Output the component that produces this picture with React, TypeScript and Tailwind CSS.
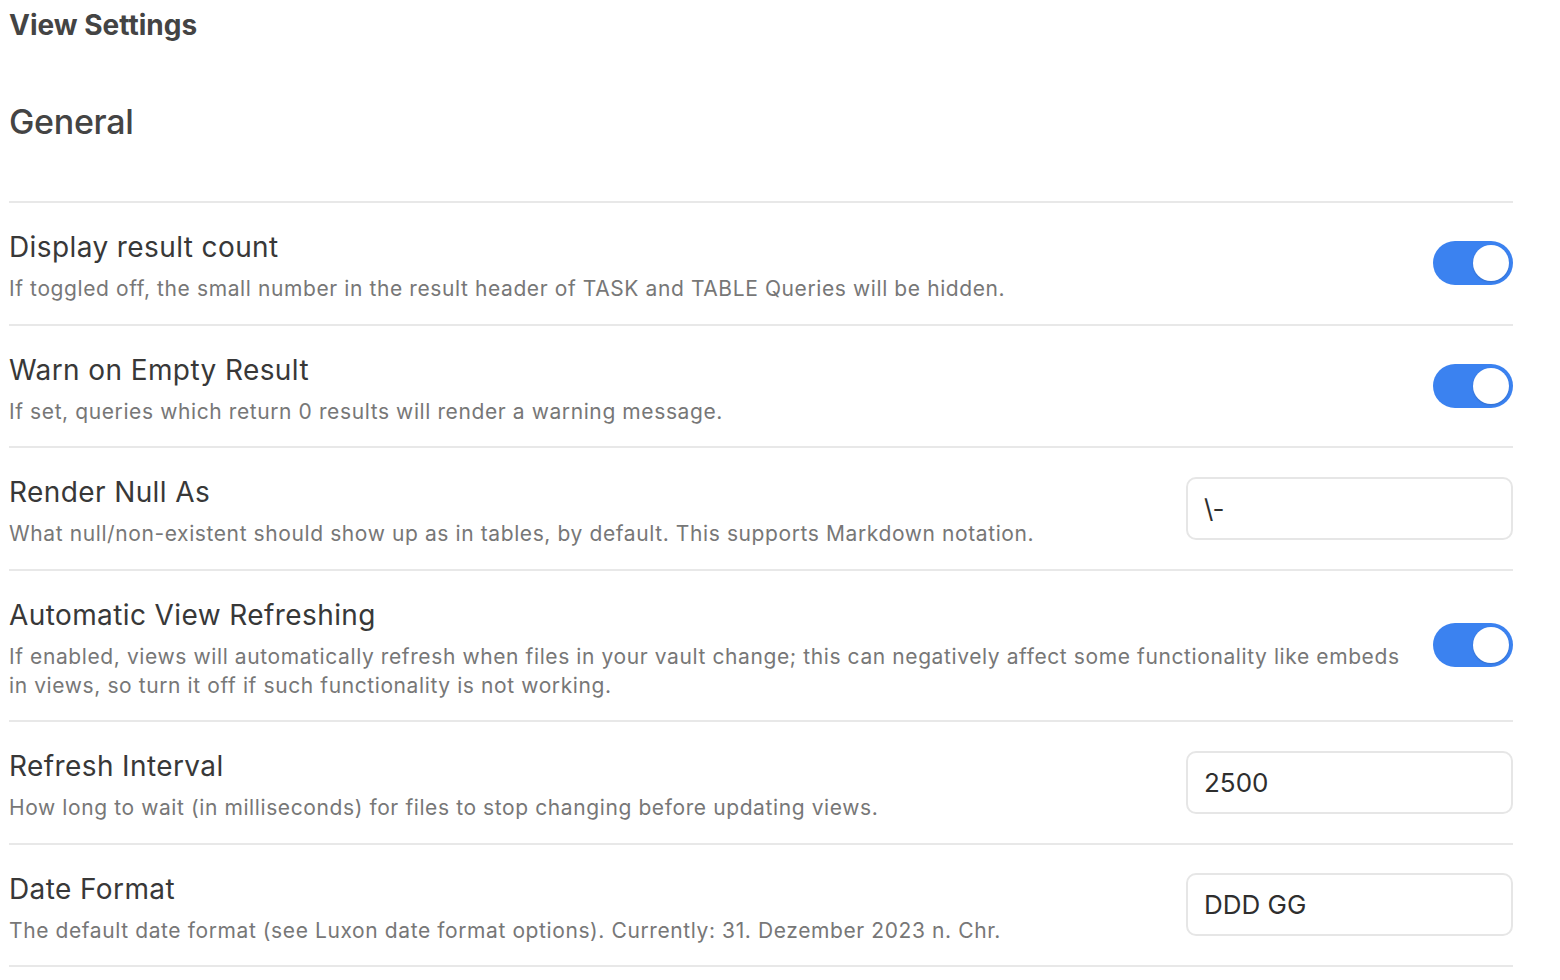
import { useState } from "react"

type Setting = {
  name: string
  desc: string
  kind: "toggle" | "text"
  value?: string
}

const settings: Setting[] = [
  {
    name: "Display result count",
    desc: "If toggled off, the small number in the result header of TASK and TABLE Queries will be hidden.",
    kind: "toggle",
  },
  {
    name: "Warn on Empty Result",
    desc: "If set, queries which return 0 results will render a warning message.",
    kind: "toggle",
  },
  {
    name: "Render Null As",
    desc: "What null/non-existent should show up as in tables, by default. This supports Markdown notation.",
    kind: "text",
    value: "\\-",
  },
  {
    name: "Automatic View Refreshing",
    desc: "If enabled, views will automatically refresh when files in your vault change; this can negatively affect some functionality like embeds in views, so turn it off if such functionality is not working.",
    kind: "toggle",
  },
  {
    name: "Refresh Interval",
    desc: "How long to wait (in milliseconds) for files to stop changing before updating views.",
    kind: "text",
    value: "2500",
  },
  {
    name: "Date Format",
    desc: "The default date format (see Luxon date format options). Currently: 31. Dezember 2023 n. Chr.",
    kind: "text",
    value: "DDD GG",
  },
]

function Toggle() {
  const [on, setOn] = useState(true)
  return (
    <button
      onClick={() => setOn(!on)}
      className={`flex h-[44px] w-[80px] shrink-0 items-center rounded-full px-[4px] ${on ? "justify-end bg-[#3b82f0]" : "justify-start bg-[#d4d4d4]"}`}
    >
      <span className="h-[36px] w-[36px] rounded-full bg-white shadow-[0_1px_2px_rgba(0,0,0,0.15)]"></span>
    </button>
  )
}

function TextInput({ value }: { value: string }) {
  const [text, setText] = useState(value)
  return (
    <input
      value={text}
      onChange={(e) => setText(e.target.value)}
      className="h-[63px] w-[327px] shrink-0 rounded-[10px] border-2 border-[#e6e6e6] bg-white pl-4 text-[26px] text-[#2e2e2e] outline-none"
    />
  )
}

export default function App() {
  return (
    <div className="min-h-screen bg-white pl-[9px] pr-[47px] font-['Inter','Liberation_Sans',sans-serif]">
      <h1 className="pt-[8px] text-[28px] font-bold leading-[34px] text-[#444]">View Settings</h1>
      <h2 className="mt-[59px] text-[34px] font-medium leading-[42px] tracking-[-0.3px] text-[#444]">General</h2>

      <div className="mt-[58px] border-t-2 border-[#e8e8e8]">
        {settings.map((s) => (
          <div key={s.name} className="flex border-b-2 border-[#e8e8e8]">
            <div className="mr-[28px] flex-1 pt-[27px] pb-[20.5px]">
              <div className="text-[28px] leading-[34px] tracking-[0.4px] text-[#383838]">{s.name}</div>
              <div className="mt-[10px] text-[21px] leading-[29px] tracking-[0.6px] text-[#777]">{s.desc}</div>
            </div>
            <div className="flex items-center">
              {s.kind === "toggle" ? <Toggle /> : <TextInput value={s.value || ""} />}
            </div>
          </div>
        ))}
      </div>
    </div>
  )
}
